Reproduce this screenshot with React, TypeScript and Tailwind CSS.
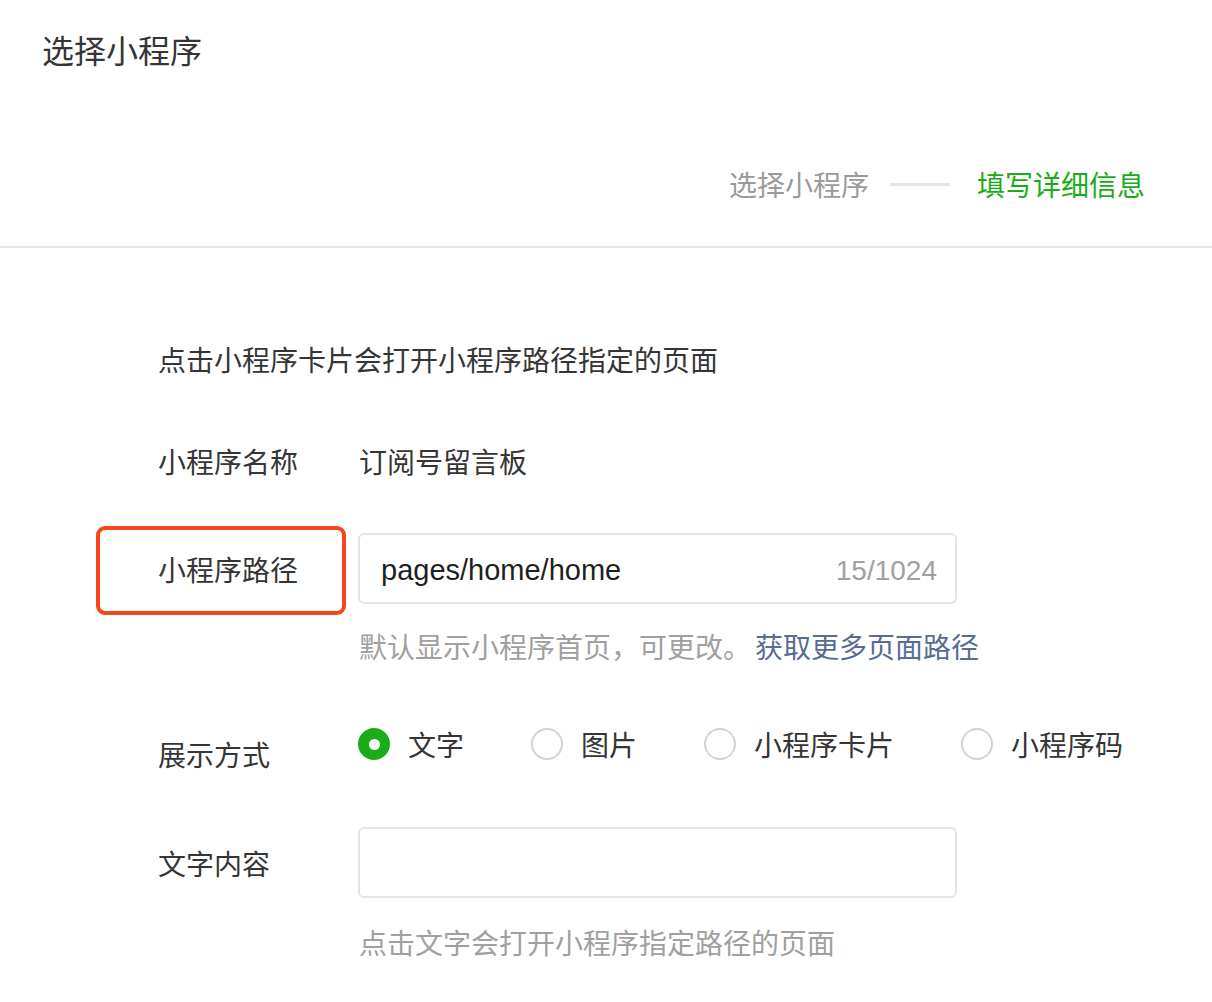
import { ReactNode } from 'react';

const cjk = { fontFamily: '"Noto Sans CJK SC", "Noto Sans", sans-serif' };
const latin = { fontFamily: '"Liberation Sans", "Noto Sans CJK SC", sans-serif' };

type RadioProps = { label: string; checked?: boolean };

function Radio({ label, checked }: RadioProps) {
  return (
    <label className="flex items-center gap-[18px] cursor-pointer">
      {checked ? (
        <span className="w-[32px] h-[32px] rounded-full bg-[#1aad19] flex items-center justify-center">
          <span className="w-[11px] h-[11px] rounded-full bg-white" />
        </span>
      ) : (
        <span className="w-[32px] h-[32px] rounded-full border-2 border-[#d2d2d2] bg-white" />
      )}
      <span className="text-[28px] leading-[28px] text-[#353535]">{label}</span>
    </label>
  );
}

function Row({ label, children, className = '', labelClass = '', highlight }: {
  label: string;
  children: ReactNode;
  className?: string;
  labelClass?: string;
  highlight?: boolean;
}) {
  return (
    <div className={`flex ${className}`}>
      <div className={`relative w-[200px] shrink-0 text-[28px] leading-[28px] text-[#353535] ${labelClass}`}>
        {highlight && (
          <div className="absolute left-[-62px] right-[12px] top-[-29px] bottom-[-32px] border-4 border-[#f5461d] rounded-[9px] pointer-events-none" />
        )}
        {label}
      </div>
      <div className="flex-1">{children}</div>
    </div>
  );
}

export default function App() {
  return (
    <div className="min-h-screen w-[1212px] bg-white" style={cjk}>
      <div>
        <h1 className="pl-[42px] pt-[33px] text-[32px] leading-[32px] text-[#353535] font-normal">
          选择小程序
        </h1>

        {/* step indicator */}
        <div className="flex justify-end items-center pr-[67px] mt-[105px]">
          <span className="text-[28px] leading-[28px] text-[#9a9a9a]">选择小程序</span>
          <span className="w-[60px] h-[3px] bg-[#e3e5ea] ml-[21px] mr-[27px]" />
          <span className="text-[28px] leading-[28px] text-[#1aad19]">填写详细信息</span>
        </div>
        <div className="mt-[48px] h-[2px] bg-[#e7e7e7]" />
      </div>

      <div className="pl-[158px]">
        <p className="mt-[97px] text-[28px] leading-[28px] text-[#353535]">
          点击小程序卡片会打开小程序路径指定的页面
        </p>

        <Row label="小程序名称" className="mt-[74px]">
          <span className="pl-[1px] text-[28px] leading-[28px] text-[#353535]">订阅号留言板</span>
        </Row>

        <Row label="小程序路径" className="mt-[55px] items-center" highlight>
          <div className="w-[599px] h-[71px] border-2 border-[#e4e4e4] rounded-[6px] flex items-center justify-between pl-[21px] pr-[18px] pt-[5px]">
            <span className="text-[29px] text-[#1f1f1f]" style={latin}>pages/home/home</span>
            <span className="text-[28px] text-[#a0a0a0]" style={latin}>15/1024</span>
          </div>
        </Row>
        <p className="ml-[201px] mt-[28px] text-[28px] leading-[28px] text-[#a0a0a0]">
          默认显示小程序首页，可更改。
          <a className="text-[#576b95] ml-[4px]" href="#">获取更多页面路径</a>
        </p>

        <Row label="展示方式" className="mt-[68px] items-start" labelClass="mt-[12px]">
          <div className="flex items-center gap-[67px]">
            <Radio label="文字" checked />
            <Radio label="图片" />
            <Radio label="小程序卡片" />
            <Radio label="小程序码" />
          </div>
        </Row>

        <Row label="文字内容" className="mt-[59px] items-center">
          <div className="w-[599px] h-[71px] border-2 border-[#e4e4e4] rounded-[6px]" />
        </Row>
        <p className="ml-[201px] mt-[30px] text-[28px] leading-[28px] text-[#a0a0a0]">
          点击文字会打开小程序指定路径的页面
        </p>
      </div>
    </div>
  );
}
